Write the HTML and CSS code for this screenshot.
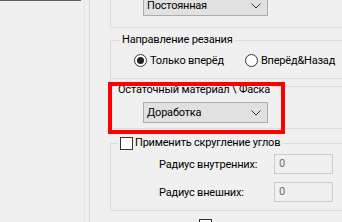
FILE: index.html
```html
<!DOCTYPE html>
<html>
<head>
    <meta charset="utf-8">
    <link rel="stylesheet" href="styles.css">
</head>
<body>
    <div class="window">
        <div class="sidebar">
            <div class="sidebar-bar"></div>
        </div>
        <div class="splitter"></div>
        <div class="settings">
            <fieldset class="group group-mode">
                <div class="group-body">
                    <div class="combo">
                        <span class="combo-text">Постоянная</span>
                        <svg class="chevron" width="10" height="6" viewBox="0 0 10 6"><polyline points="0.5,0.5 5,5 9.5,0.5" fill="none" stroke="#333" stroke-width="1"/></svg>
                    </div>
                </div>
            </fieldset>

            <fieldset class="group group-direction">
                <legend>Направление резания</legend>
                <div class="group-body radios">
                    <label class="radio"><span class="radio-mark checked"></span>Только вперёд</label>
                    <label class="radio"><span class="radio-mark"></span>Вперёд&amp;Назад</label>
                </div>
            </fieldset>

            <fieldset class="group group-rest">
                <legend>Остаточный материал \ Фаска</legend>
                <div class="group-body">
                    <div class="combo">
                        <span class="combo-text">Доработка</span>
                        <svg class="chevron" width="10" height="6" viewBox="0 0 10 6"><polyline points="0.5,0.5 5,5 9.5,0.5" fill="none" stroke="#333" stroke-width="1"/></svg>
                    </div>
                </div>
            </fieldset>

            <fieldset class="group group-fillet">
                <legend><label class="check"><span class="check-mark"></span>Применить скругление углов</label></legend>
                <div class="group-body fields">
                    <div class="field">
                        <span class="field-label">Радиус внутренних:</span>
                        <div class="input">0</div>
                    </div>
                    <div class="field">
                        <span class="field-label">Радиус внешних:</span>
                        <div class="input">0</div>
                    </div>
                </div>
            </fieldset>

            <div class="bottom-check"><span class="check-mark"></span></div>

            <div class="highlight"></div>
        </div>
    </div>
</body>
</html>
```

FILE: styles.css
```css
:root {
    --bg-color: #f0f0f0;
    --group-border: #dcdcdc;
    --combo-bg: #e1e1e1;
    --combo-border: #adadad;
    --input-border: #cccccc;
    --mark-border: #333333;
    --text-color: #000000;
    --disabled-text: #6d6d6d;
    --highlight: #ff0000;
}

html, body {
    margin: 0;
    padding: 0;
    background: var(--bg-color);
    overflow: hidden;
}

body {
    font-family: Roboto, "Liberation Sans", sans-serif;
    font-size: 11px;
    letter-spacing: -0.2px;
    color: var(--text-color);
}

.window {
    display: flex;
    height: 222px;
}

.sidebar {
    width: 84px;
    flex: none;
}

.sidebar-bar {
    width: 81px;
    height: 1px;
    background: #5f5f5f;
}

.splitter {
    width: 4px;
    flex: none;
    border-left: 1px solid #e4e4e4;
    border-right: 1px solid #d9d9d9;
}

.settings {
    position: relative;
    flex: none;
    width: 300px;
    padding-left: 20px;
}

.group {
    width: 300px;
    margin: 0;
    padding: 0;
    border: 1px solid var(--group-border);
    box-sizing: border-box;
}

.group legend {
    padding: 0 2px;
    line-height: 14px;
    height: 14px;
    white-space: nowrap;
}

.group-mode {
    margin-top: -30px;
}

.group-mode .group-body {
    padding: 24px 0 11px 32px;
}

.group-direction {
    margin-top: 5px;
}

.group-direction legend {
    margin-left: 9px;
}

.radios {
    display: flex;
    align-items: center;
    height: 13px;
    padding: 7px 0 11px 23px;
}

.radio {
    display: flex;
    align-items: center;
    gap: 3px;
    white-space: nowrap;
}

.radio-mark {
    width: 11px;
    height: 11px;
    border: 1px solid var(--mark-border);
    border-radius: 50%;
    background: #fff;
    position: relative;
}

.radio-mark.checked::after {
    content: "";
    position: absolute;
    left: 2px;
    top: 2px;
    width: 7px;
    height: 7px;
    border-radius: 50%;
    background: #222;
}

.radio + .radio {
    margin-left: 21px;
}

.group-rest {
    margin-top: -4px;
}

.group-rest legend {
    margin-left: 5px;
    padding-top: 8px;
    height: 14px;
}

.group-rest .group-body {
    padding: 5px 0 5px 32px;
}

.combo {
    width: 125px;
    height: 21px;
    box-sizing: border-box;
    border: 1px solid var(--combo-border);
    background: var(--combo-bg);
    display: flex;
    align-items: center;
    justify-content: space-between;
    padding: 0 6px 0 3px;
}

.combo-text {
    line-height: 12px;
}

.group-fillet {
    margin-top: 7px;
}

.group-fillet legend {
    margin-left: 7px;
}

.check {
    display: flex;
    align-items: center;
    gap: 2px;
}

.check-mark {
    display: block;
    width: 11px;
    height: 11px;
    border: 1px solid var(--mark-border);
    background: #fff;
}

.fields {
    display: flex;
    flex-direction: column;
    gap: 8px;
    padding: 4px 0 8px 48px;
}

.field {
    display: flex;
    align-items: center;
}

.field-label {
    width: 115px;
}

.input {
    width: 59px;
    height: 20px;
    box-sizing: border-box;
    border: 1px solid var(--input-border);
    color: var(--disabled-text);
    line-height: 18px;
    padding-left: 4px;
}

.bottom-check {
    margin: 8px 0 0 89px;
}

.highlight {
    position: absolute;
    left: 18px;
    top: 82px;
    width: 177px;
    height: 52px;
    box-sizing: border-box;
    border: 4px solid var(--highlight);
}
```
